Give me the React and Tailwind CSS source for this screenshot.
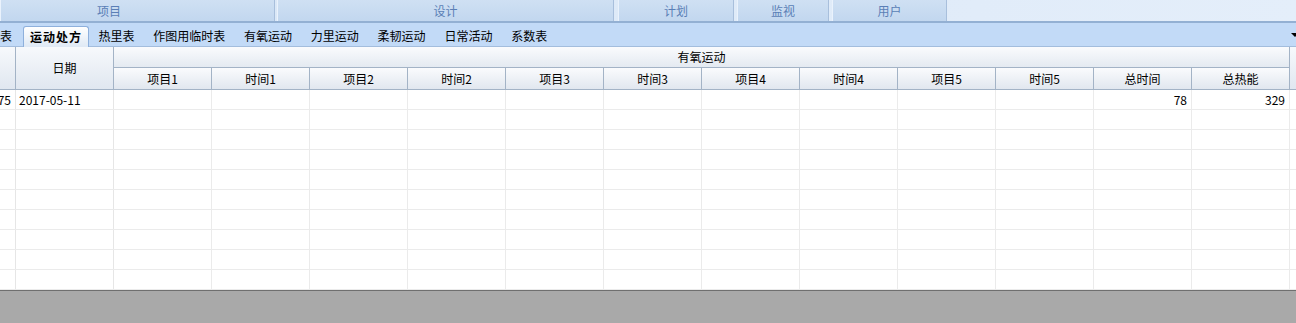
const TOP = [
  { label: '项目', w: 'w-[275px] mr-[2px]', pad: 'justify-start pl-[96px]' },
  { label: '设计', w: 'w-[337px] mr-[4px]', pad: 'justify-center' },
  { label: '计划', w: 'w-[116px] mr-[3px]', pad: 'justify-center' },
  { label: '监视', w: 'w-[92px] mr-[3px]', pad: 'justify-center' },
  { label: '用户', w: 'w-[115px]', pad: 'justify-center' },
];

const TABS = ['热里表', '作图用临时表', '有氧运动', '力里运动', '柔韧运动', '日常活动', '系数表'];

const COLS = ['项目1', '时间1', '项目2', '时间2', '项目3', '时间3', '项目4', '时间4', '项目5', '时间5', '总时间', '总热能'];

const ROWS = [
  { id: '75', date: '2017-05-11', total: '78', kcal: '329' },
  {}, {}, {}, {}, {}, {}, {}, {}, {},
];

const FONT = { fontFamily: '"SimSun", "Noto Sans CJK SC", "DejaVu Sans", sans-serif' };

export default function App() {
  return (
    <div className="w-[1296px] h-[323px] overflow-hidden flex flex-col bg-white text-[12px] text-black" style={FONT}>
      {/* top menu */}
      <div className="h-[23px] flex shrink-0 bg-gradient-to-r from-[#d8e6f6] to-[#e4eefa] border-b-2 border-[#93b0d3]">
        {TOP.map(t => (
          <div
            key={t.label}
            className={`${t.w} h-full flex items-center ${t.pad} bg-gradient-to-b from-[#cfe0f3] to-[#c2d7ef] border-r border-[#a8bfdc] border-l border-l-[#eaf2fc] text-[#5a7fb6]`}
          >
            {t.label}
          </div>
        ))}
        <div className="flex-1" />
      </div>

      {/* tabs */}
      <div className="h-[24px] shrink-0 flex items-end bg-[#c2daf7] border-b border-[#a3bddd] relative">
        <div className="h-[21px] flex items-center pr-[11px]">表</div>
        <div className="h-[21px] flex items-center px-[6px] font-bold tracking-[1px] bg-gradient-to-b from-[#ffffff] to-[#dfe9f5] border border-b-0 border-[#8eb0dc] rounded-t-[3px] -mb-px">
          运动处方
        </div>
        {TABS.map(t => (
          <div key={t} className="h-[21px] flex items-center px-[9.4px]">{t}</div>
        ))}
        <div className="absolute right-[-3px] top-[10px] w-0 h-0 border-l-[4px] border-r-[4px] border-t-[4px] border-l-transparent border-r-transparent border-t-black" />
      </div>

      {/* header */}
      <div className="grid grid-cols-[16px_98px_repeat(12,98px)_1fr] grid-rows-[21px_21px] shrink-0 border-b border-[#a3b3c6]">
        <div className="row-span-2 bg-gradient-to-b from-[#f7f9fc] to-[#e0e7f0] border-r border-[#a3b3c6]" />
        <div className="row-span-2 flex items-center justify-center bg-gradient-to-b from-[#f7f9fc] to-[#e0e7f0] border-r border-[#a3b3c6]">日期</div>
        <div className="col-span-12 flex items-center justify-center bg-gradient-to-b from-[#fafbfd] to-[#e4eaf1] border-r border-b border-[#a3b3c6]">有氧运动</div>
        <div className="row-span-2 bg-gradient-to-b from-[#f7f9fc] to-[#e0e7f0]" />
        {COLS.map(c => (
          <div key={c} className="flex items-center justify-center bg-gradient-to-b from-[#fafbfd] to-[#e1e7ef] border-r border-[#a3b3c6]">{c}</div>
        ))}
      </div>

      {/* rows */}
      <div className="flex-1 flex flex-col min-h-0">
        {ROWS.map((r, i) => (
          <div key={i} className="grid grid-cols-[16px_98px_repeat(12,98px)_1fr] h-[20px] shrink-0 border-b border-[#ebebeb]">
            <div className="flex items-center justify-end pr-[4px] border-r border-[#e6e6e6] overflow-hidden">{r.id}</div>
            <div className="flex items-center pl-[3px] border-r border-[#e6e6e6]">{r.date}</div>
            {COLS.map((c, j) => (
              <div key={c} className="flex items-center justify-end pr-[4px] border-r border-[#ebebeb]">
                {j === 10 ? r.total : j === 11 ? r.kcal : null}
              </div>
            ))}
            <div />
          </div>
        ))}
        <div className="flex-1 bg-[#a9a9a9] border-t border-[#6f6f6f]" />
      </div>
    </div>
  );
}
